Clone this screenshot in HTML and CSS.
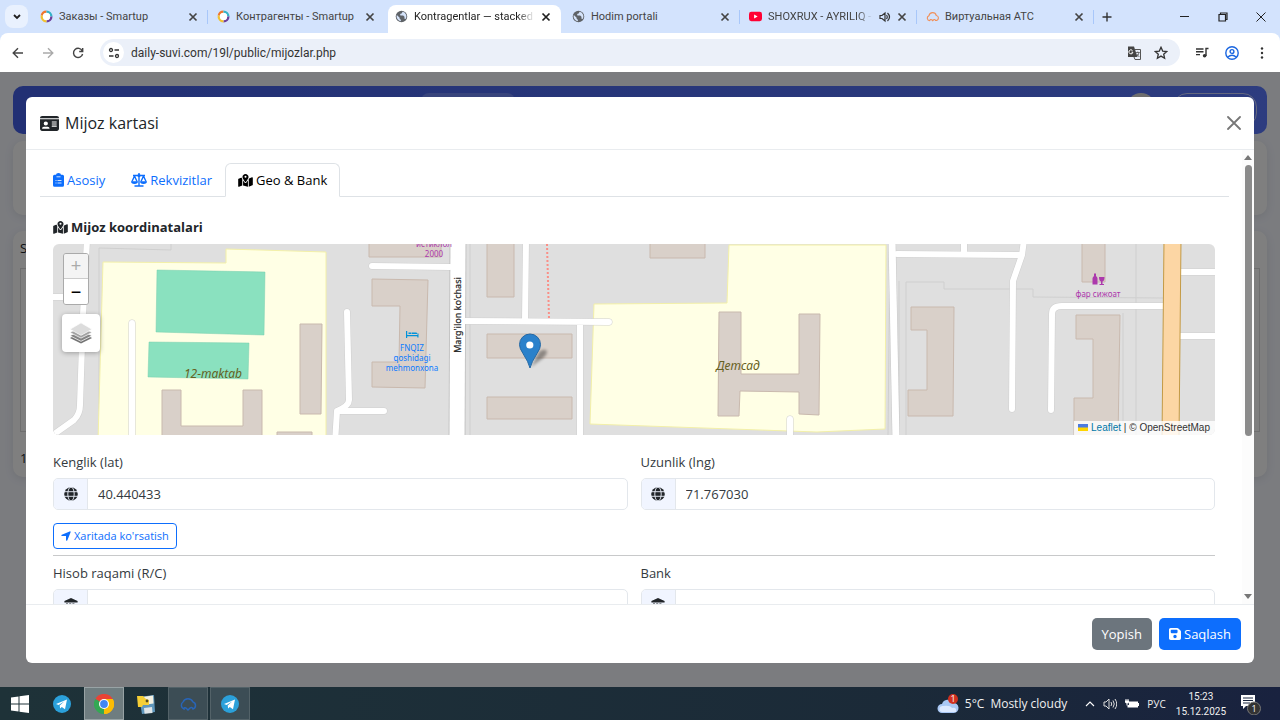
FILE: index.html
```html
<!DOCTYPE html>
<html lang="uz">
<head>
    <meta charset="utf-8">
    <title>Kontragentlar</title>
    <link rel="stylesheet" href="styles.css">
</head>
<body>
    <!-- shared icons -->
    <svg class="sprite" aria-hidden="true">
        <symbol id="close" viewBox="0 0 10 10"><path d="M1.5 1.5l7 7M8.500 1.500l-7 7" stroke="currentColor" stroke-width="1.7"/></symbol>
        <symbol id="smartup" viewBox="0 0 14 14">
            <g fill="none" stroke-width="2.600">
                <path d="M2 6A5.200 5.200 0 0 1 7 1.800" stroke="#f0762d"/>
                <path d="M7 1.800A5.200 5.200 0 0 1 12.200 7" stroke="#35b4c9"/>
                <path d="M12.200 7A5.200 5.200 0 0 1 7 12.200" stroke="#6d3f9c"/>
                <path d="M7 12.200A5.200 5.200 0 0 1 2 6" stroke="#f2c230"/>
            </g>
            <circle cx="7" cy="7" r="4" fill="#fff"/>
        </symbol>
        <symbol id="earth" viewBox="0 0 14 14">
            <circle cx="7" cy="7" r="6.200" fill="#5f6368"/>
            <path d="M2 5.500l3 2.800v1.200l1.300 1v1.500A5 5 0 0 1 2 5.500zM8 2l-.5 1.500-2 .8.300 1.500h3l1.400 1.500v2l1.200.4A5 5 0 0 0 8 2z" fill="#d6e4fb"/>
        </symbol>
        <symbol id="map-pin" viewBox="0 0 576 512"><path fill="currentColor" d="M408 120c0 54.6-73.1 151.9-105.2 192c-7.7 9.600-22 9.600-29.600 0C241.100 271.900 168 174.600 168 120C168 53.700 221.700 0 288 0s120 53.700 120 120zm8 80.400c3.500-6.900 6.700-13.800 9.600-20.600c.5-1.200 1-2.500 1.500-3.700l116-46.400C558.900 123.400 576 135 576 152V422.800c0 9.800-6 18.600-15.100 22.300L416 503V200.400zM137.600 138.300c2.400 14.100 7.200 28.300 12.800 41.500c2.900 6.800 6.100 13.700 9.600 20.600V451.800L32.900 502.700C17.100 509 0 497.400 0 480.400V209.600c0-9.800 6-18.600 15.100-22.300l122.600-49zM327.800 332c13.900-17.400 35.700-45.700 56.200-77V504.300L192 449.400V255c20.500 31.300 42.300 59.600 56.200 77c20.500 25.600 59.100 25.600 79.600 0zM288 152a40 40 0 1 0 0-80 40 40 0 1 0 0 80z"/></symbol>
        <symbol id="globe" viewBox="0 0 14 14">
            <circle cx="7" cy="7" r="6.800" fill="currentColor"/>
            <g fill="none" stroke="#f1f5ff" stroke-width=".9"><ellipse cx="7" cy="7" rx="3.200" ry="7"/><path d="M0 4.700h14M0 9.300h14"/></g>
        </symbol>
        <symbol id="bank" viewBox="0 0 14 14"><path fill="currentColor" d="M7 0l6.600 3v1.500H.4V3zM2 5.500h2V10h1.200V5.500h2V10h1.200V5.500h2V10h1.200l1.500 2v1.500H.4V12L2 10z"/></symbol>
        <symbol id="telegram" viewBox="0 0 20 20">
            <circle cx="10" cy="10" r="9" fill="#2ba0da"/>
            <path d="M4 10l11-4.500-2 9.800-3.200-2.400-1.700 1.600-.4-3 4.800-4.300-5.900 3.700z" fill="#fff"/>
        </symbol>
    </svg>

    <header class="browser">
        <div class="tabstrip">
            <button class="tab-search" aria-label="Search tabs"><svg width="8" height="6" viewBox="0 0 8 6"><path d="M1 1l3 3 3-3" fill="none" stroke="#1f1f1f" stroke-width="1.800"/></svg></button>
            <div class="tab">
                <svg class="favicon"><use href="#smartup"/></svg><span class="tab-title">Заказы - Smartup</span>
                <button class="tab-close" aria-label="Close"><svg><use href="#close"/></svg></button>
            </div>
            <div class="tab no-line">
                <svg class="favicon"><use href="#smartup"/></svg><span class="tab-title">Контрагенты - Smartup</span>
                <button class="tab-close" aria-label="Close"><svg><use href="#close"/></svg></button>
            </div>
            <div class="tab active">
                <svg class="favicon"><use href="#earth"/></svg><span class="tab-title fade">Kontragentlar — stacked modal</span>
                <button class="tab-close" aria-label="Close"><svg><use href="#close"/></svg></button>
            </div>
            <div class="tab">
                <svg class="favicon"><use href="#earth"/></svg><span class="tab-title">Hodim portali</span>
                <button class="tab-close" aria-label="Close"><svg><use href="#close"/></svg></button>
            </div>
            <div class="tab">
                <svg class="favicon" viewBox="0 0 14 14"><rect y="2" width="14" height="10" rx="2.500" fill="#f03"/><path d="M5.500 4.800v4.400L9.300 7z" fill="#fff"/></svg><span class="tab-title fade">SHOXRUX - AYRILIQ - VIDEO</span>
                <svg class="sound" viewBox="0 0 12 12"><path d="M1 4.500h2l3-2.500v8L3 7.500H1z" fill="none" stroke="#333" stroke-width="1.200"/><path d="M7.500 4q1.500 2 0 4M8.500 2q4 4 0 8" fill="none" stroke="#333" stroke-width="1.200"/></svg>
                <button class="tab-close" aria-label="Close"><svg><use href="#close"/></svg></button>
            </div>
            <div class="tab">
                <svg class="favicon" viewBox="0 0 14 14"><path d="M4 11.500a2.800 2.800 0 0 1-.8-5.400 4 4 0 0 1 7.800-.2 2.700 2.700 0 0 1-.8 5.400q-.5-1.700-2-.8l-1 1-1-1q-1.500-.8-2.200 1z" fill="none" stroke="#f0905a" stroke-width="1.200"/></svg><span class="tab-title">Виртуальная АТС</span>
                <button class="tab-close" aria-label="Close"><svg><use href="#close"/></svg></button>
            </div>
            <button class="new-tab" aria-label="New tab"><svg width="10" height="10" viewBox="0 0 10 10"><path d="M5 .5v9M.5 5h9" stroke="#333" stroke-width="1.400"/></svg></button>
            <div class="win-buttons">
                <button aria-label="Minimize"><svg width="10" height="10" viewBox="0 0 10 10"><path d="M0 4.500h9" stroke="#222"/></svg></button>
                <button aria-label="Restore"><svg width="10" height="10" viewBox="0 0 10 10"><path d="M1 2.500h6.500v6.500H1zM2.500 2.500V1H9v6.500H7.500" fill="none" stroke="#222" stroke-width="1.200"/></svg></button>
                <button aria-label="Close window"><svg width="10" height="10" viewBox="0 0 10 10"><path d="M.5.5l9 9M9.500.5l-9 9" stroke="#222"/></svg></button>
            </div>
        </div>
        <div class="toolbar">
            <button class="tool" aria-label="Back"><svg viewBox="0 0 12 12"><path d="M11 6H1.500M6 1.200L1.200 6 6 10.800" fill="none" stroke="#444" stroke-width="1.400"/></svg></button>
            <button class="tool" aria-label="Forward"><svg viewBox="0 0 12 12"><path d="M1 6h9.500M6 1.200L10.800 6 6 10.800" fill="none" stroke="#aaa" stroke-width="1.400"/></svg></button>
            <button class="tool" aria-label="Reload"><svg viewBox="0 0 12 12"><path d="M10.300 4A4.600 4.600 0 1 0 10.600 7M10.700 1v3.500H7.200" fill="none" stroke="#444" stroke-width="1.400"/></svg></button>
            <div class="omnibox">
                <button class="site-info" aria-label="Site info"><svg width="12" height="12" viewBox="0 0 12 12"><g fill="none" stroke="#333" stroke-width="1.300"><circle cx="3" cy="3" r="1.500"/><path d="M6.500 3H11M1 9h4.500"/><circle cx="9" cy="9" r="1.500"/></g></svg></button>
                <input class="address" type="text" aria-label="Address" value="daily-suvi.com/19l/public/mijozlar.php">
                <button class="tool" aria-label="Translate"><svg class="big" viewBox="0 0 14 14"><path d="M1 .5h6l3.500 10.500H1z" fill="#444"/><path d="M8 3.500h5.500v10H8L7 11" fill="none" stroke="#555"/><path d="M8.800 6.500h4M10.800 5.500v1M12 6.500q-.5 3-2.500 4M9.800 8l2.500 3" stroke="#555" stroke-width=".8" fill="none"/><path d="M5.500 4.600a2 2 0 1 0 .4 1.600H4.500" fill="none" stroke="#fff"/></svg></button>
                <button class="tool" aria-label="Bookmark"><svg class="big" viewBox="0 0 14 14"><path d="M7 1.300l1.700 3.800 4 .4-3 2.700.9 4L7 10.100l-3.600 2.100.9-4-3-2.700 4-.4z" fill="none" stroke="#333" stroke-width="1.300"/></svg></button>
            </div>
            <button class="tool" aria-label="Media"><svg class="big" viewBox="0 0 14 14"><path d="M1 3h7.500M1 5.800h7.500M1 8.600h4M11 10V2.500h2.500" fill="none" stroke="#333" stroke-width="1.400"/><circle cx="9.600" cy="9.800" r="1.800" fill="#333"/></svg></button>
            <button class="tool" aria-label="Profile"><svg class="big" viewBox="0 0 14 14"><g fill="none" stroke="#1a66e0" stroke-width="1.400"><circle cx="7" cy="7" r="6.200"/><circle cx="7" cy="5.500" r="1.900"/><path d="M2.800 11q4.200-3.600 8.400 0"/></g></svg></button>
            <button class="tool" aria-label="Menu"><svg viewBox="0 0 12 12"><g fill="#333"><circle cx="6" cy="1.500" r="1.200"/><circle cx="6" cy="6" r="1.200"/><circle cx="6" cy="10.500" r="1.200"/></g></svg></button>
        </div>
    </header>

    <main class="page">
        <!-- list page under the dialog -->
        <div class="navbar"><span class="nav-field"></span><span class="avatar"></span><span class="nav-pill"></span></div>
        <div class="card filters"></div>
        <div class="card list"><span>S</span><div class="list-box"></div><span>1</span></div>

        <div class="backdrop">
            <section class="modal" role="dialog" aria-label="Mijoz kartasi">
                <div class="modal-header">
                    <svg width="19" height="17" viewBox="0 0 576 512"><path fill="currentColor" d="M0 96l576 0c0-35.300-28.700-64-64-64H64C28.700 32 0 60.700 0 96zm0 32V416c0 35.300 28.700 64 64 64H512c35.300 0 64-28.700 64-64V128H0zM64 405.300c0-29.500 23.900-53.300 53.300-53.300H234.700c29.500 0 53.300 23.900 53.300 53.300c0 5.900-4.800 10.700-10.700 10.700H74.700c-5.900 0-10.700-4.800-10.700-10.700zM176 192a64 64 0 1 1 0 128 64 64 0 1 1 0-128zm176 16c0-8.800 7.200-16 16-16H496c8.800 0 16 7.200 16 16s-7.200 16-16 16H368c-8.800 0-16-7.200-16-16zm0 64c0-8.800 7.200-16 16-16H496c8.800 0 16 7.200 16 16s-7.200 16-16 16H368c-8.800 0-16-7.200-16-16zm0 64c0-8.800 7.200-16 16-16H496c8.800 0 16 7.200 16 16s-7.200 16-16 16H368c-8.800 0-16-7.200-16-16z"/></svg>
                    <h5>Mijoz kartasi</h5>
                    <button class="btn-close" aria-label="Yopish"><svg width="14" height="14" viewBox="0 0 14 14"><path d="M1 1l12 12M13 1L1 13" stroke="#777" stroke-width="1.800" stroke-linecap="round"/></svg></button>
                </div>
                <div class="modal-body">
                    <div class="modal-content">
                        <div class="nav-tabs" role="tablist">
                            <button class="nav-link" role="tab">
                                <svg width="11" height="14" viewBox="0 0 11 14"><path d="M1.500 1.700H3a2.500 1.700 0 0 1 5 0h1.500a1.500 1.500 0 0 1 1.500 1.500v9A1.500 1.500 0 0 1 9.500 13.700h-8A1.500 1.500 0 0 1 0 12.200v-9a1.500 1.500 0 0 1 1.500-1.500z" fill="currentColor"/><path d="M3.500 3.800h4M2.500 7.500h1M4.500 7.500h4M2.500 10h1M4.500 10h4" stroke="#fff" stroke-width=".8"/></svg>
                                Asosiy
                            </button>
                            <button class="nav-link" role="tab">
                                <svg width="16" height="14" viewBox="0 0 16 14"><path d="M2 2.500h12M8 0v13M3.500 13h9M3.500 3L1 8.500M3.500 3L6 8.500M12.500 3L10 8.500M12.500 3L15 8.500" fill="none" stroke="currentColor" stroke-width="1.400"/><circle cx="8" cy="2.500" r="1.600" fill="currentColor"/><path d="M0 8.300h7a3.500 2.700 0 0 1-7 0zM9 8.300h7a3.500 2.700 0 0 1-7 0z" fill="currentColor"/></svg>
                                Rekvizitlar
                            </button>
                            <button class="nav-link active" role="tab" aria-selected="true">
                                <svg width="15" height="13"><use href="#map-pin"/></svg>
                                Geo &amp; Bank
                            </button>
                        </div>
                        <div class="tab-pane">
                            <h6><svg width="15" height="13"><use href="#map-pin"/></svg>Mijoz koordinatalari</h6>
                            <div class="map">
                                <svg class="map-tiles" viewBox="53 244 1162 191" preserveAspectRatio="xMidYMid slice">
                                    <g class="line">
                                        <path d="M99 435V248l72 2v-6M470 244v191M906 435V282h38v7h89v8l130 1M1136 244v191M1123 313v122M890 244l-2 191M899 435V281"/>
                                    </g>
                                    <g class="yard">
                                        <path d="M103 262l123 1v-14l100 3v190H98z"/>
                                        <path d="M594 304l133-1 2-58h157l-1 184-68 3-227-8z"/>
                                    </g>
                                    <path class="pitch" d="M157 270l108 2-1 63-108-3zM149 342l100 1-1 36-100-2z"/>
                                    <g class="building">
                                        <path d="M162 440v-50h19v36h62v-36h19v50z"/>
                                        <path d="M300 324h22l-1 90h-21zM277 440v-8h35v8z"/>
                                        <path d="M369 240h72v17h-72z"/>
                                        <path d="M372 279l56 1-3 108-53-1v-25h27l1-56h-28z"/>
                                        <path d="M487 240h27v57h-27zM487 334h85v24h-85zM487 397h85v22h-85z"/>
                                        <path d="M650 240h55v18h-55z"/>
                                        <path d="M719 312h22v62h58v-60h21l-1 101-20-1v-22l-59-1-1 25h-21z"/>
                                        <path d="M911 307h43l-1 109h-45v-26h19v-60h-16z"/>
                                        <path d="M1082 240h23v42h-23zM1076 315h44l-2 125h-44v-42h19v-59h-17z"/>
                                    </g>
                                    <path class="steps" d="M547 244l2 74"/>
                                    <g class="road-edge">
                                        <path d="M87 240l-4 75-3 90q0 9-6 15L50 437M50 297h34M132 323v120M347 312l2 88q0 6-12 11l-2 32M337 411h47M372 266l78 1M526 240l-1 81M462 321l147 1M580 322v120M790 419v22M897 254l125 1M964 240v14M1024 240l-2 15-9 26-1 128M1051 410l1-96q0-8 10-8h101M1179 272h40M1179 336h40"/>
                                    </g>
                                    <g class="wide-edge"><path d="M458 240l-1 200"/></g>
                                    <g class="mid-edge"><path d="M892 240l4 200"/></g>
                                    <g class="road">
                                        <path d="M87 240l-4 75-3 90q0 9-6 15L50 437M50 297h34M132 323v120M347 312l2 88q0 6-12 11l-2 32M337 411h47M372 266l78 1M526 240l-1 81M462 321l147 1M580 322v120M790 419v22M897 254l125 1M964 240v14M1024 240l-2 15-9 26-1 128M1051 410l1-96q0-8 10-8h101M1179 272h40M1179 336h40"/>
                                    </g>
                                    <path class="wide" d="M458 240l-1 200"/>
                                    <path class="mid" d="M892 240l4 200"/>
                                    <path class="highway" d="M1164 240h17l-2 200h-17z"/>
                                    <g class="place">
                                        <text x="213" y="378">12-maktab</text>
                                        <text x="738" y="370">Детсад</text>
                                    </g>
                                    <text class="street" transform="translate(461 315) rotate(-90)">Marg'ilon ko'chasi</text>
                                    <g class="shop">
                                        <text x="434" y="247">истиклол</text>
                                        <text x="434" y="257">2000</text>
                                        <text x="1098" y="297">фар сижоат</text>
                                        <path d="M1092.500 284.500v-6q0-1.500 1.500-2.500v-2.500h2v2.500q1.500 1 1.500 2.500v6zM1099 277h5.500q0 4-2 4.500v2.500h1.500v1h-4.500v-1h1.500v-2.500q-2-.5-2-4.500z"/>
                                    </g>
                                    <g class="hotel">
                                        <path d="M406 331h1.200v4H417.500v-1.500h1v4h-1.200v-1.300H407.200V338H406zM408.500 332.500h2.500v1.500h-2.500zM411.500 332.500h5l1 1.500h-6z"/>
                                        <text x="412" y="351">FNQIZ</text>
                                        <text x="412" y="361">qoshidagi</text>
                                        <text x="412" y="371">mehmonxona</text>
                                    </g>
                                    <g class="marker">
                                        <path d="M531 367l8-15q5-4 8-1 0 5-8 10z" fill="#000" opacity=".35" filter="url(#soft)"/>
                                        <path d="M530 368q-1.500-6-7-14.500-3.500-5-3.500-9a10.500 10.500 0 0 1 21 0q0 4-3.500 9-5.500 8.500-7 14.500z" fill="#2a81cb" stroke="#2468a4"/>
                                        <circle cx="529.800" cy="345" r="3.600" fill="#fff"/>
                                    </g>
                                    <filter id="soft"><feGaussianBlur stdDeviation="1.500"/></filter>
                                </svg>
                                <div class="zoom-control">
                                    <button class="disabled" aria-label="Zoom in">+</button>
                                    <button aria-label="Zoom out">−</button>
                                </div>
                                <button class="layers" aria-label="Layers"><svg width="24" height="24" viewBox="0 0 26 26"><path d="M13 12.500l12 6-12 6-12-6z" fill="#747474"/><path d="M13 10l12 6-12 6-12-6z" fill="#858585" stroke="#fff" stroke-width=".8"/><path d="M13 6l12 6.500-12 6-12-6z" fill="#a3a3a3" stroke="#fff" stroke-width=".8"/><path d="M13 2l12 7-12 6.500L1 9z" fill="#dcdcdc" stroke="#fff" stroke-width=".8"/></svg></button>
                                <div class="attribution">
                                    <svg width="10" height="7" viewBox="0 0 10 7"><path d="M0 0h10v4H0z" fill="#4c7be1"/><path d="M0 3.500h10V7H0z" fill="#ffd500"/></svg>
                                    <a href="#">Leaflet</a> | © OpenStreetMap
                                </div>
                            </div>
                            <div class="row">
                                <div class="field">
                                    <label for="lat">Kenglik (lat)</label>
                                    <div class="input-group"><span class="addon"><svg><use href="#globe"/></svg></span><input type="text" id="lat" value="40.440433"></div>
                                </div>
                                <div class="field">
                                    <label for="lng">Uzunlik (lng)</label>
                                    <div class="input-group"><span class="addon"><svg><use href="#globe"/></svg></span><input type="text" id="lng" value="71.767030"></div>
                                </div>
                            </div>
                            <button class="btn-outline"><svg width="10" height="12" viewBox="0 0 448 512"><path fill="currentColor" d="M429.600 92.100c4.900-11.900 2.100-25.600-7-34.700s-22.800-11.900-34.700-7l-352 144c-14.200 5.800-22.200 20.800-19.300 35.800s16.100 25.800 31.400 25.800H224V432c0 15.300 10.800 28.400 25.800 31.400s30-5.100 35.800-19.300l144-352z"/></svg>Xaritada ko'rsatish</button>
                            <hr>
                            <div class="row">
                                <div class="field">
                                    <label for="rc">Hisob raqami (R/C)</label>
                                    <div class="input-group"><span class="addon"><svg><use href="#bank"/></svg></span><input type="text" id="rc"></div>
                                </div>
                                <div class="field">
                                    <label for="bank-name">Bank</label>
                                    <div class="input-group"><span class="addon"><svg><use href="#bank"/></svg></span><input type="text" id="bank-name"></div>
                                </div>
                            </div>
                        </div>
                    </div>
                    <div class="scrollbar">
                        <svg width="8" height="5" viewBox="0 0 8 5"><path d="M0 5h8L4 0z" fill="#777"/></svg>
                        <div class="track"><div class="thumb"></div></div>
                        <svg width="8" height="5" viewBox="0 0 8 5"><path d="M0 0h8L4 5z" fill="#777"/></svg>
                    </div>
                </div>
                <div class="modal-footer">
                    <button class="btn btn-secondary">Yopish</button>
                    <button class="btn btn-primary"><svg width="12" height="14" viewBox="0 0 448 512"><path fill="currentColor" d="M64 32C28.700 32 0 60.700 0 96V416c0 35.300 28.700 64 64 64H384c35.300 0 64-28.700 64-64V173.300c0-17-6.700-33.300-18.700-45.300L352 50.700C340 38.700 323.700 32 306.700 32H64zm0 96c0-17.700 14.300-32 32-32H288c17.700 0 32 14.300 32 32v64c0 17.700-14.300 32-32 32H96c-17.700 0-32-14.300-32-32V128zM224 288a64 64 0 1 1 0 128 64 64 0 1 1 0-128z"/></svg>Saqlash</button>
                </div>
            </section>
        </div>
    </main>

    <footer class="taskbar">
        <button class="task" aria-label="Start"><svg viewBox="0 0 20 20"><path d="M1 3.500l7.500-1v7H1zM9.500 2.300L19 1v8.500H9.500zM1 10.500h7.500v7l-7.500-1zM9.500 10.500H19V19l-9.500-1.300z" fill="#fff"/></svg></button>
        <button class="task" aria-label="Telegram"><svg><use href="#telegram"/></svg></button>
        <button class="task current" aria-label="Chrome"><svg viewBox="0 0 20 20"><path d="M10 10L1.300 5A10 10 0 0 1 18.700 5z" fill="#ea4335"/><path d="M10 10L18.700 5A10 10 0 0 1 10 20z" fill="#fbbc05"/><path d="M10 10v10A10 10 0 0 1 1.300 5z" fill="#34a853"/><path d="M10 5h8.700A10 10 0 0 1 10 20l4.300-7.500z" fill="#fbbc05"/><circle cx="10" cy="10" r="5" fill="#fff"/><circle cx="10" cy="10" r="3.900" fill="#4285f4"/></svg></button>
        <button class="task" aria-label="Files"><svg viewBox="0 0 20 20"><path d="M3 3l15-2 1 17-13 2z" fill="#5e96bb"/><path d="M6 3l11-1.500.5 8L7 11z" fill="#f4f1e2"/><path d="M8 14l8-1 .5 6-8 .8z" fill="#dfe5e8"/><path d="M1 2h6l3 3 3 1v5H7l-1 2H2z" fill="#f5ce35"/><circle cx="11" cy="7" r="1.400" fill="#544c20"/></svg></button>
        <button class="task open" aria-label="Cloud"><svg viewBox="0 0 20 20"><path d="M6 15a4 4 0 0 1-1-7 5.500 5.500 0 0 1 10 0 3.700 3.700 0 0 1 0 7q-1-2.500-3-1l-2 2-2-2q-2-1-2 1z" fill="none" stroke="#2865b8" stroke-width="1.500"/></svg></button>
        <button class="task open" aria-label="Telegram chat"><svg><use href="#telegram"/></svg></button>
        <div class="tray">
            <div class="weather">
                <svg width="22" height="20" viewBox="0 0 22 20"><path d="M5 19a4.500 4.500 0 0 1 0-9 6 6 0 0 1 11-1 5 5 0 0 1 1 10z" fill="#a9c8f5"/><path d="M5 18a3 3 0 0 1 1-6q7-1 9 2 5-1 4 4z" fill="#dce9ff"/><circle cx="16" cy="5" r="5" fill="#d0301f"/><text x="16" y="8" class="weather-count">1</text></svg>
                <span>5°C</span><span>Mostly cloudy</span>
            </div>
            <svg width="10" height="6" viewBox="0 0 10 6"><path d="M1 5l4-4 4 4" fill="none" stroke="#fff" stroke-width="1.100"/></svg>
            <svg width="14" height="12" viewBox="0 0 14 12"><path d="M1 4h2l3-3v10L3 8H1zM8 4q1.500 2 0 4M10 2.500q2.500 3.500 0 7M12 1q3.500 5 0 10" fill="none" stroke="#ddd"/></svg>
            <svg width="14" height="12" viewBox="0 0 14 12"><path d="M3.500 3.500H13V5h1v3h-1v1.500H2.500V7H4z" fill="#fff"/><path d="M0 2.500h4v2L2.500 5.500v2h-1v-2L0 4.500zM.5 1h1v1.500h-1zM2.500 1h1v1.500h-1z" fill="#fff"/></svg>
            <span class="lang">РУС</span>
            <div class="clock"><span>15:23</span><span>15.12.2025</span></div>
            <svg width="22" height="22" viewBox="0 0 22 22"><path d="M1 2h14v11H6l-3 3v-3H1z" fill="#fff"/><path d="M3 5h10M3 7.500h10M3 10h7" stroke="#1b2740"/><circle cx="14" cy="15.500" r="6.500" fill="#333" stroke="#777"/><text x="14" y="19" class="notice-count">1</text></svg>
        </div>
    </footer>
</body>
</html>
```

FILE: styles.css
```css
* {
    box-sizing: border-box;
}

body {
    margin: 0;
    height: 100vh;
    display: flex;
    flex-direction: column;
    overflow: hidden;
    font-family: "Open Sans", "Noto Sans", sans-serif;
    font-size: 13px;
    line-height: 20px;
    color: #212529;
}

button, input {
    font: inherit;
    color: inherit;
    border: 0;
    background: none;
    padding: 0;
    margin: 0;
}

button {
    display: flex;
    align-items: center;
    justify-content: center;
    flex-shrink: 0;
}

svg {
    flex-shrink: 0;
}

.sprite {
    position: absolute;
    width: 0;
    height: 0;
}

/* browser */
.browser {
    background: #d3e3fd;
    font-family: Roboto, sans-serif;
}

.tabstrip {
    height: 33px;
    display: flex;
    align-items: center;
    padding-left: 5px;
    font-size: 11px;
    color: #444;
}

.tab-search {
    width: 23px;
    height: 23px;
    border-radius: 8px;
    background: #e9f1fe;
    margin-right: 3px;
}

.tab {
    flex: 0 1 177px;
    min-width: 0;
    height: 28px;
    margin-top: 5px;
    padding: 0 10px 5px 9px;
    display: flex;
    align-items: center;
    gap: 6px;
    background: linear-gradient(#a8c7fa, #a8c7fa) right 5px / 1px 14px no-repeat;
}

.tab.no-line {
    background: none;
}

.tab.active {
    background: #fff;
    border-radius: 8px 8px 0 0;
    color: #1f1f1f;
    flex-basis: 173px;
    margin-left: 3px;
    margin-right: 2px;
    padding-left: 7px;
}

.favicon {
    width: 13px;
    height: 13px;
}

.tab-title {
    flex: 1;
    min-width: 0;
    white-space: nowrap;
    overflow: hidden;
}

.fade {
    mask-image: linear-gradient(to right, #000 85%, transparent);
}

.tab-close svg {
    width: 10px;
    height: 10px;
}

.sound {
    width: 12px;
    height: 12px;
}

.new-tab {
    width: 26px;
}

.win-buttons {
    margin-left: auto;
    display: flex;
}

.win-buttons button {
    width: 38px;
}

.toolbar {
    height: 39px;
    display: flex;
    align-items: center;
    gap: 6px;
    padding: 0 6px;
    background: #fff;
    border-radius: 8px 8px 0 0;
}

.tool {
    width: 24px;
    height: 24px;
}

.tool svg {
    width: 12px;
    height: 12px;
}

.tool svg.big {
    width: 14px;
    height: 14px;
}

.omnibox {
    flex: 1;
    height: 27px;
    display: flex;
    align-items: center;
    gap: 3px;
    margin-left: 4px;
    margin-right: 4px;
    padding: 0 7px 0 3px;
    border-radius: 14px;
    background: #ebf0f9;
}

.site-info {
    width: 21px;
    height: 21px;
    border-radius: 50%;
    background: #fff;
}

.address {
    flex: 1;
    min-width: 0;
    padding-left: 4px;
    font-size: 12px;
    color: #333;
}

/* page behind the dialog */
.page {
    flex: 1;
    min-height: 0;
    position: relative;
    overflow: hidden;
    padding: 14px 13px;
    background: #f6f8ff;
}

.navbar {
    height: 48px;
    padding: 7px 10px 0;
    display: flex;
    gap: 18px;
    border-radius: 10px;
    background: linear-gradient(to right, #4460e8, #5a78ff);
}

.nav-field {
    width: 94px;
    height: 20px;
    margin: 0 auto 0 398px;
    border-radius: 8px;
    background: #7088f8;
}

.avatar {
    width: 28px;
    height: 28px;
    border-radius: 50%;
    background: #ddd;
}

.nav-pill {
    width: 84px;
    height: 34px;
    border: 1px solid #c8d0ff;
    border-radius: 14px;
}

.card {
    margin-top: 7px;
    padding: 7px;
    border-radius: 10px;
    background: #fff;
    box-shadow: 0 2px 8px #dfe2ea;
}

.filters {
    height: 74px;
}

.list {
    margin-top: 16px;
    padding-bottom: 9px;
    display: flex;
    flex-direction: column;
    height: 246px;
}

.list-box {
    flex: 1;
    margin: 10px 0 16px;
    border: 1px solid #ddd;
}

.backdrop {
    position: absolute;
    inset: 0;
    padding: 25px 26px 24px;
    background: rgba(0, 0, 0, 0.5);
}

/* dialog */
.modal {
    height: 100%;
    display: flex;
    flex-direction: column;
    border-radius: 6px;
    background: #fff;
    overflow: hidden;
}

.modal-header {
    height: 53px;
    display: flex;
    align-items: center;
    gap: 6px;
    padding: 0 13px 0 14px;
    border-bottom: 1px solid #e9ecef;
}

.modal-header h5 {
    margin: 0;
    font-size: 16px;
    font-weight: 500;
}

.btn-close {
    margin-left: auto;
}

.modal-body {
    flex: 1;
    min-height: 0;
    display: flex;
}

.modal-content {
    flex: 1;
    min-width: 0;
    padding: 13px 13px 0 14px;
    overflow: hidden;
}

.nav-tabs {
    display: flex;
    border-bottom: 1px solid #dee2e6;
}

.nav-link {
    height: 34px;
    margin-bottom: -1px;
    padding: 0 12px;
    gap: 3px;
    border: 1px solid transparent;
    border-radius: 6px 6px 0 0;
    color: #0d6efd;
}

.nav-link.active {
    color: #000;
    background: #fff;
    border-color: #dee2e6 #dee2e6 #fff;
}

.tab-pane {
    padding: 20px 14px 0 13px;
}

h6 {
    display: flex;
    align-items: center;
    gap: 3px;
    margin: 0 0 7px;
    font-size: 13px;
    line-height: 20px;
    font-weight: 700;
}

.map {
    position: relative;
    height: 191px;
    border-radius: 6px;
    overflow: hidden;
    background: #dfdfdf;
}

.map-tiles {
    display: block;
    width: 100%;
    height: 100%;
    font-family: "Noto Sans", sans-serif;
    text-anchor: middle;
}

.line path {
    fill: none;
    stroke: #cfcfcf;
}

.yard path {
    fill: #ffffe5;
    stroke: #f3f0a8;
}

.pitch {
    fill: #8ae1bf;
    stroke: #79cfae;
    stroke-width: 0.5;
}

.building path {
    fill: #d9d0c9;
    stroke: #c9b9ae;
}

.steps {
    stroke: #fa8f87;
    stroke-width: 2;
    stroke-dasharray: 2 2;
}

.road-edge path, .road path, .wide-edge path, .mid-edge path {
    fill: none;
    stroke-linecap: round;
    stroke-linejoin: round;
}

.road-edge path {
    stroke: #cfcfcf;
    stroke-width: 7;
}

.road path {
    stroke: #fff;
    stroke-width: 6;
}

.wide-edge path {
    stroke: #c4c4c4;
    stroke-width: 17;
}

.mid-edge path {
    stroke: #c8c8c8;
    stroke-width: 8;
}

.wide {
    stroke: #fff;
    stroke-width: 15;
}

.mid {
    stroke: #fff;
    stroke-width: 7;
}

.highway {
    fill: #fcd6a4;
    stroke: #c39a45;
}

.place text {
    font: italic 12px "Noto Sans", sans-serif;
    fill: #666022;
}

.street {
    font-size: 9px;
    fill: #222;
    stroke: #222;
    stroke-width: 0.2;
}

.shop {
    font-size: 8px;
    fill: #ac39ac;
}

.hotel {
    font-size: 8px;
    fill: #0d7bff;
}

.hotel path {
    fill: #0092da;
}

.zoom-control {
    position: absolute;
    left: 10px;
    top: 9px;
    width: 26px;
    border: 1px solid #aaa;
    border-radius: 3px;
    overflow: hidden;
}

.zoom-control button {
    width: 100%;
    height: 25px;
    background: #fff;
    color: #000;
    font-family: "Liberation Sans", sans-serif;
    font-size: 18px;
    font-weight: 400;
}

.zoom-control .disabled {
    background: #f4f4f4;
    color: #aaa;
    border-bottom: 1px solid #ccc;
}

.layers {
    position: absolute;
    left: 9px;
    top: 70px;
    width: 38px;
    height: 38px;
    border-radius: 4px;
    background: #fff;
    box-shadow: 0 1px 5px rgba(0, 0, 0, 0.3);
}

.attribution {
    position: absolute;
    right: 0;
    bottom: 0;
    padding: 0 5px 0 4px;
    background: rgba(255, 255, 255, 0.8);
    font-family: "Liberation Sans", sans-serif;
    font-size: 10px;
    line-height: 14px;
    color: #333;
}

.attribution a {
    color: #0078a8;
    text-decoration: none;
}

.row {
    display: grid;
    grid-template-columns: 1fr 1fr;
    gap: 13px;
}

.map + .row {
    margin-top: 17px;
}

label {
    display: block;
    margin-bottom: 6px;
    color: #343a40;
}

.input-group {
    display: flex;
    height: 32px;
    border: 1px solid #e3e7ec;
    border-radius: 5px;
    overflow: hidden;
}

.addon {
    width: 34px;
    display: flex;
    align-items: center;
    justify-content: center;
    background: #f1f5ff;
    border-right: 1px solid #e3e7ec;
}

.addon svg {
    width: 14px;
    height: 14px;
}

.input-group input {
    flex: 1;
    min-width: 0;
    padding: 0 10px;
    color: #343a40;
}

.btn-outline {
    height: 26px;
    margin-top: 13px;
    padding: 0 7px;
    gap: 3px;
    border: 1px solid #0d6efd;
    border-radius: 4px;
    color: #0d6efd;
    font-size: 11px;
}

hr {
    height: 1px;
    margin: 6px 0 7px;
    border: 0;
    background: #c8c9ca;
}

.scrollbar {
    width: 12px;
    display: flex;
    flex-direction: column;
    align-items: center;
    gap: 5px;
    padding: 5px 0;
    background: #fcfcfc;
}

.track {
    flex: 1;
}

.thumb {
    width: 7px;
    height: 64%;
    border-radius: 4px;
    background: #8b8b8b;
}

.modal-footer {
    height: 59px;
    display: flex;
    align-items: center;
    justify-content: flex-end;
    gap: 7px;
    padding: 0 13px;
    border-top: 1px solid #e9ecef;
}

.btn {
    height: 32px;
    padding: 0 10px;
    gap: 3px;
    border-radius: 5px;
    color: #fff;
}

.btn-secondary {
    background: #6c757d;
}

.btn-primary {
    background: #0d6efd;
}

/* taskbar */
.taskbar {
    height: 33px;
    display: flex;
    gap: 2px;
    background: linear-gradient(to right, #1e3238, #1b2a38 70%, #19223f);
    color: #f0f0f0;
}

.task {
    width: 40px;
}

.task svg {
    width: 20px;
    height: 20px;
}

.task.current {
    background: #6f7d80;
    border: 1px solid #98a3a5;
}

.task.open {
    background: #3c4d55;
    border: 1px solid #536268;
}

.tray {
    margin-left: auto;
    display: flex;
    align-items: center;
    gap: 8px;
    padding-right: 18px;
    font-size: 12px;
}

.weather {
    display: flex;
    align-items: center;
    gap: 6px;
    margin-right: 10px;
}

.lang {
    font-size: 10px;
}

.clock {
    display: flex;
    flex-direction: column;
    align-items: center;
    font-family: Roboto, sans-serif;
    font-size: 10px;
    line-height: 15px;
    margin: 0 6px 0 2px;
}

.weather-count, .notice-count {
    font-size: 9px;
    text-anchor: middle;
    fill: #fff;
}
```
